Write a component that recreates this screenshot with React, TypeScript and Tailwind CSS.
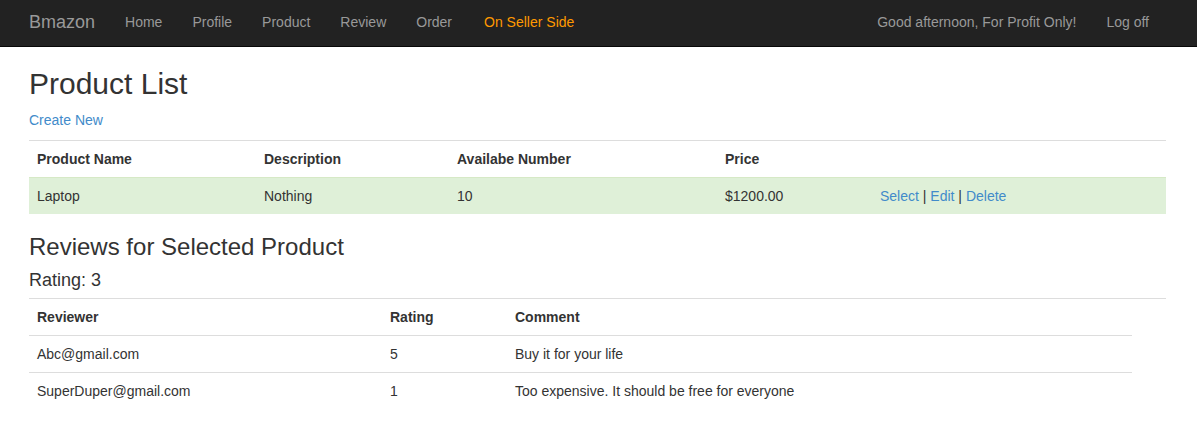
import React from "react";

const navLinks = ["Home", "Profile", "Product", "Review", "Order"];

export default function App() {
  return (
    <div className="min-h-[428px] bg-white text-[14px] leading-5 text-[#333]" style={{ fontFamily: '"Liberation Sans", Arial, sans-serif' }}>
      <nav className="flex h-[47px] w-[1197px] items-center border-b border-[#080808] bg-[#222] pb-[2px] pl-[14px] pr-[33px]">
        <a className="px-[15px] text-[18px] leading-5 text-[#999]">Bmazon</a>
        {navLinks.map((l) => (
          <a key={l} className="px-[15px] text-[14px] leading-5 text-[#999]">
            {l}
          </a>
        ))}
        <a className="pl-[17px] pr-[15px] text-[14px] leading-5 text-[#ff9900]">On Seller Side</a>
        <div className="ml-auto flex">
          <a className="px-[15px] text-[14px] leading-5 text-[#999]">Good afternoon, For Profit Only!</a>
          <a className="px-[15px] text-[14px] leading-5 text-[#999]">Log off</a>
        </div>
      </nav>

      <main className="px-[29px]">
        <h2 className="mt-5 mb-[10px] text-[30px] leading-[33px] font-normal">Product List</h2>
        <p className="mb-[10px]">
          <a className="text-[#428bca]">Create New</a>
        </p>
        <table className="mb-5 w-[1137px] border-collapse">
          <tbody>
            <tr>
              <th className="w-[227px] border-t border-[#ddd] p-2 text-left font-bold">Product Name</th>
              <th className="w-[193px] border-t border-[#ddd] p-2 text-left font-bold">Description</th>
              <th className="w-[268px] border-t border-[#ddd] p-2 text-left font-bold">Availabe Number</th>
              <th className="w-[155px] border-t border-[#ddd] p-2 text-left font-bold">Price</th>
              <th className="border-t border-[#ddd] p-2"></th>
            </tr>
            <tr className="bg-[#dff0d8]">
              <td className="border-t border-[#d6e9c6] p-2">Laptop</td>
              <td className="border-t border-[#d6e9c6] p-2">Nothing</td>
              <td className="border-t border-[#d6e9c6] p-2">10</td>
              <td className="border-t border-[#d6e9c6] p-2">$1200.00</td>
              <td className="border-t border-[#d6e9c6] p-2">
                <a className="text-[#428bca]">Select</a> | <a className="text-[#428bca]">Edit</a> |{" "}
                <a className="text-[#428bca]">Delete</a>
              </td>
            </tr>
          </tbody>
        </table>

        <h3 className="mb-[10px] text-[24px] leading-[26px] font-normal">Reviews for Selected Product</h3>
        <h4 className="mt-[10px] mb-2 text-[18px] leading-5 font-normal">Rating: 3</h4>

        <table className="w-[1137px] border-collapse">
          <tbody>
            <tr>
              <th className="w-[353px] border-t border-[#ddd] p-2 text-left font-bold">Reviewer</th>
              <th className="w-[125px] border-t border-[#ddd] p-2 text-left font-bold">Rating</th>
              <th className="w-[625px] border-t border-[#ddd] p-2 text-left font-bold">Comment</th>
              <th className="border-t border-[#ddd] p-2"></th>
            </tr>
            <tr>
              <td className="border-t border-[#ddd] p-2">Abc@gmail.com</td>
              <td className="border-t border-[#ddd] p-2">5</td>
              <td className="border-t border-[#ddd] p-2">Buy it for your life</td>
            </tr>
            <tr>
              <td className="border-t border-[#ddd] p-2">SuperDuper@gmail.com</td>
              <td className="border-t border-[#ddd] p-2">1</td>
              <td className="border-t border-[#ddd] p-2">Too expensive. It should be free for everyone</td>
            </tr>
          </tbody>
        </table>
      </main>
    </div>
  );
}
